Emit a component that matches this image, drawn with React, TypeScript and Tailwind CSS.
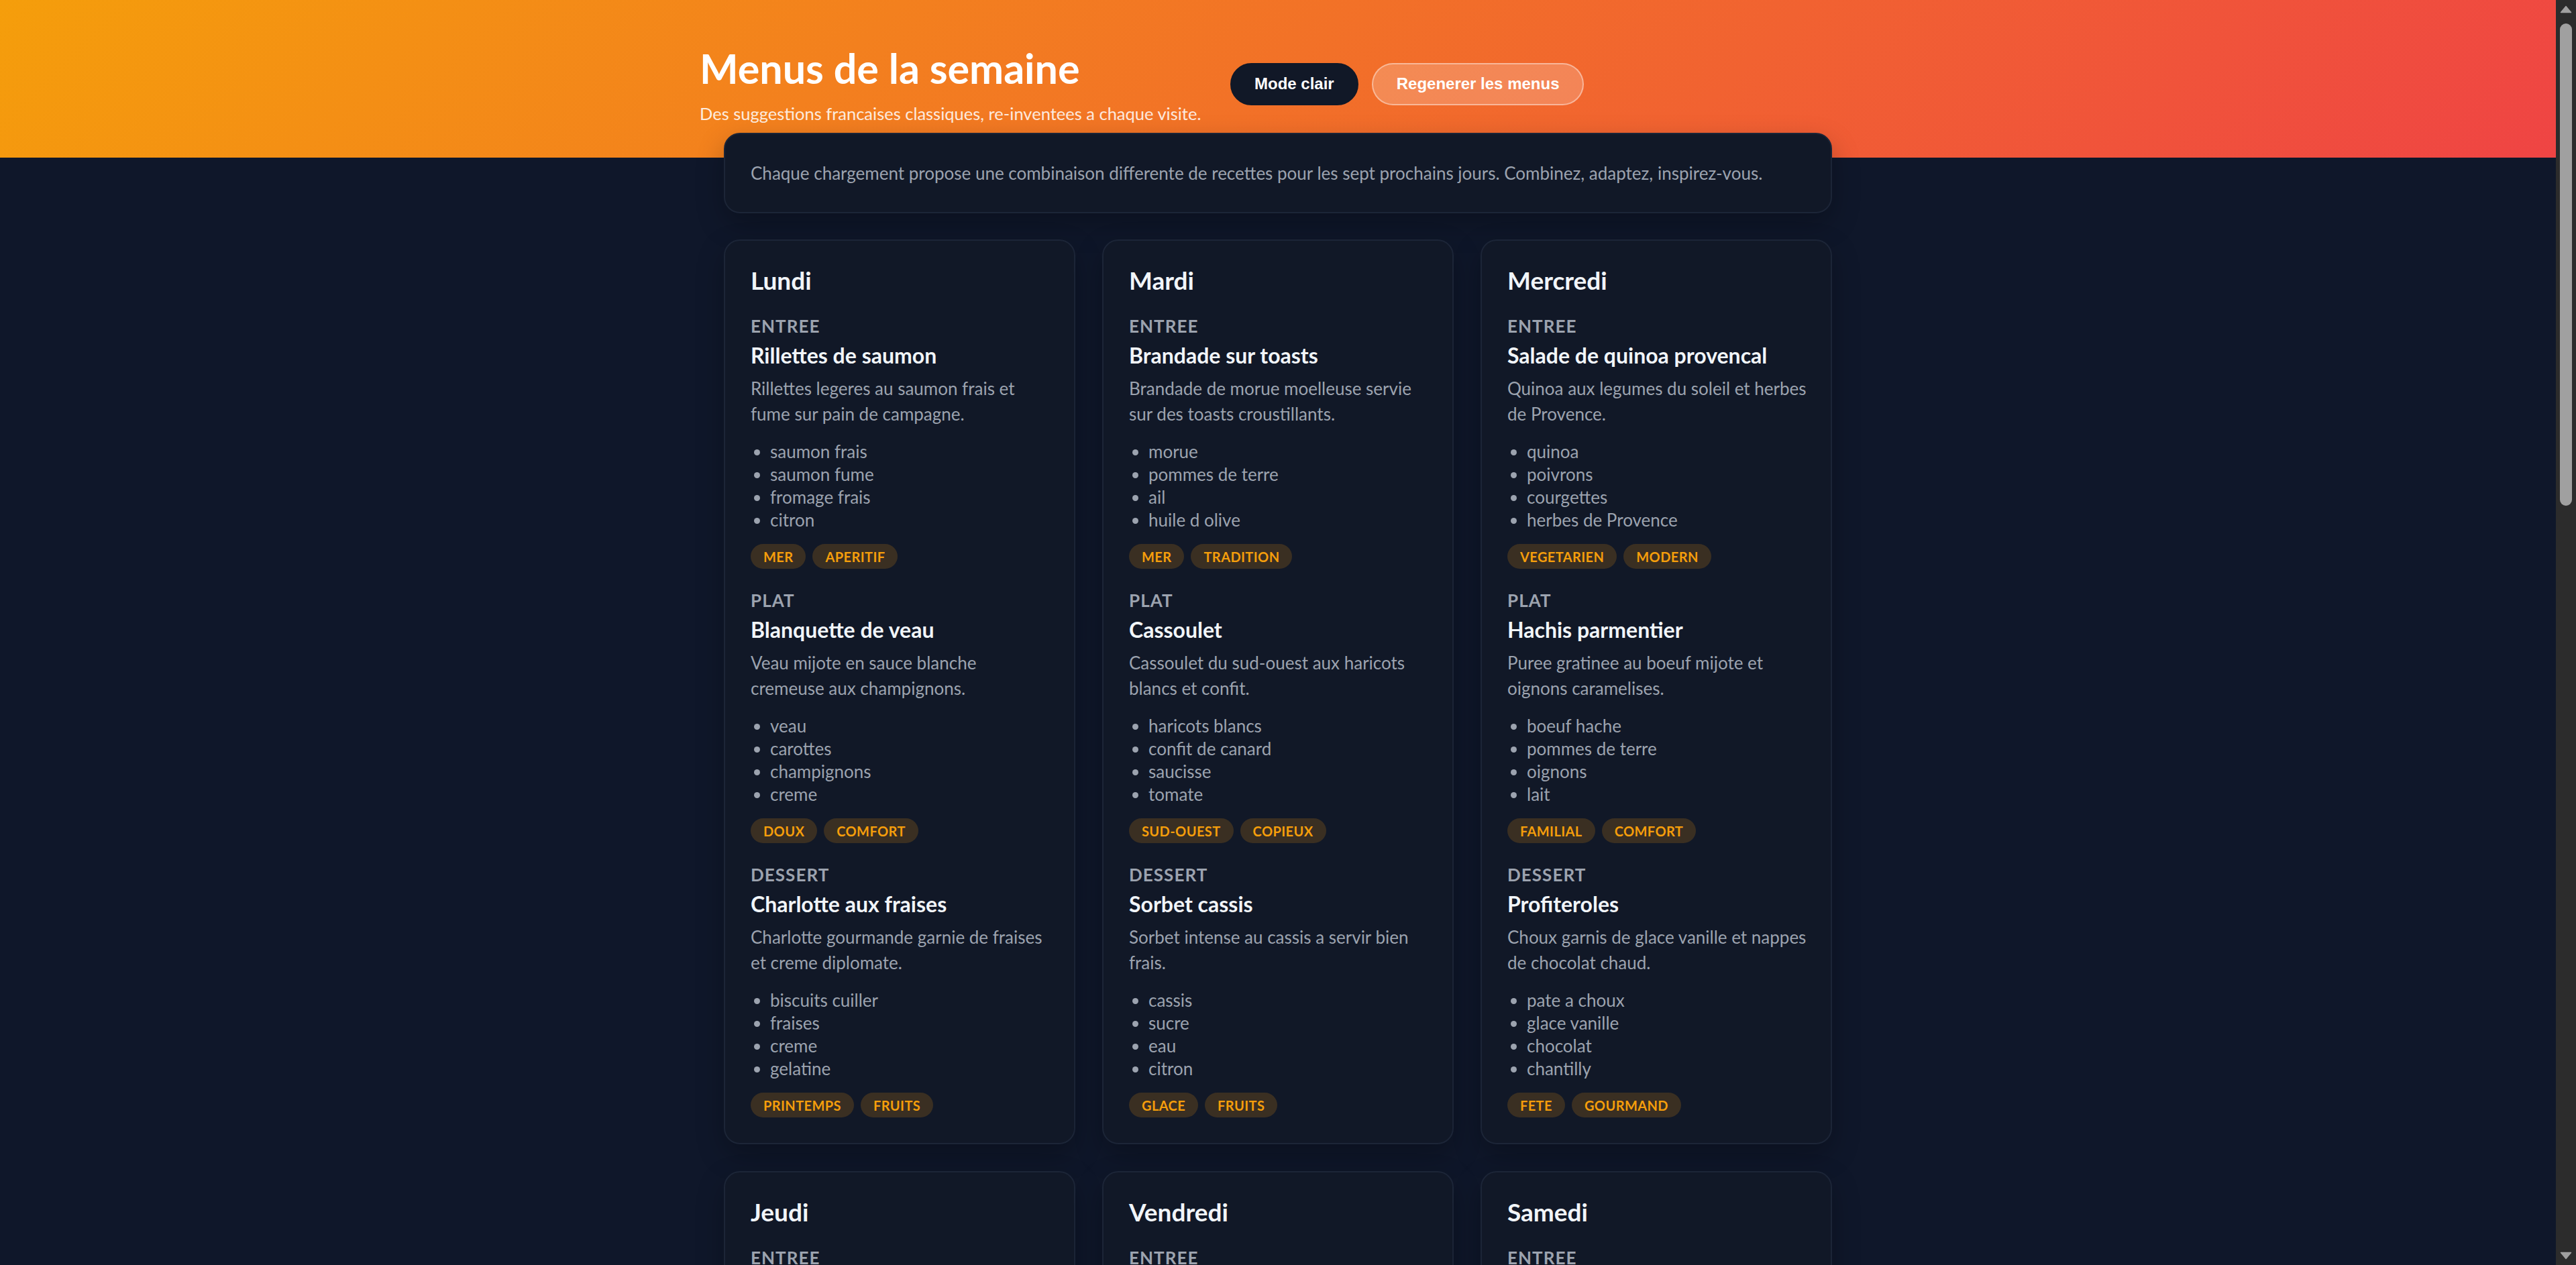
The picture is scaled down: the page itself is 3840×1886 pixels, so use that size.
type Dish = {
  name: string;
  desc: string;
  items: string[];
  tags: string[];
};

type Day = {
  day: string;
  entree: Dish;
  plat: Dish;
  dessert: Dish;
};

const week: Day[] = [
  {
    day: "Lundi",
    entree: {
      name: "Rillettes de saumon",
      desc: "Rillettes legeres au saumon frais et\nfume sur pain de campagne.",
      items: ["saumon frais", "saumon fume", "fromage frais", "citron"],
      tags: ["mer", "aperitif"],
    },
    plat: {
      name: "Blanquette de veau",
      desc: "Veau mijote en sauce blanche\ncremeuse aux champignons.",
      items: ["veau", "carottes", "champignons", "creme"],
      tags: ["doux", "comfort"],
    },
    dessert: {
      name: "Charlotte aux fraises",
      desc: "Charlotte gourmande garnie de fraises\net creme diplomate.",
      items: ["biscuits cuiller", "fraises", "creme", "gelatine"],
      tags: ["printemps", "fruits"],
    },
  },
  {
    day: "Mardi",
    entree: {
      name: "Brandade sur toasts",
      desc: "Brandade de morue moelleuse servie\nsur des toasts croustillants.",
      items: ["morue", "pommes de terre", "ail", "huile d olive"],
      tags: ["mer", "tradition"],
    },
    plat: {
      name: "Cassoulet",
      desc: "Cassoulet du sud-ouest aux haricots\nblancs et confit.",
      items: ["haricots blancs", "confit de canard", "saucisse", "tomate"],
      tags: ["sud-ouest", "copieux"],
    },
    dessert: {
      name: "Sorbet cassis",
      desc: "Sorbet intense au cassis a servir bien\nfrais.",
      items: ["cassis", "sucre", "eau", "citron"],
      tags: ["glace", "fruits"],
    },
  },
  {
    day: "Mercredi",
    entree: {
      name: "Salade de quinoa provencal",
      desc: "Quinoa aux legumes du soleil et herbes\nde Provence.",
      items: ["quinoa", "poivrons", "courgettes", "herbes de Provence"],
      tags: ["vegetarien", "modern"],
    },
    plat: {
      name: "Hachis parmentier",
      desc: "Puree gratinee au boeuf mijote et\noignons caramelises.",
      items: ["boeuf hache", "pommes de terre", "oignons", "lait"],
      tags: ["familial", "comfort"],
    },
    dessert: {
      name: "Profiteroles",
      desc: "Choux garnis de glace vanille et nappes\nde chocolat chaud.",
      items: ["pate a choux", "glace vanille", "chocolat", "chantilly"],
      tags: ["fete", "gourmand"],
    },
  },
  {
    day: "Jeudi",
    entree: {
      name: "Soupe a l oignon",
      desc: "Soupe gratinee aux oignons fondants\net croutons au comte.",
      items: ["oignons", "bouillon", "pain", "comte"],
      tags: ["hiver", "tradition"],
    },
    plat: {
      name: "Coq au vin",
      desc: "Volaille mijotee au vin rouge avec\nlardons et champignons.",
      items: ["poulet", "vin rouge", "lardons", "champignons"],
      tags: ["bourgogne", "copieux"],
    },
    dessert: {
      name: "Tarte tatin",
      desc: "Tarte renversee aux pommes\ncaramelisees.",
      items: ["pommes", "beurre", "sucre", "pate brisee"],
      tags: ["classique", "fruits"],
    },
  },
  {
    day: "Vendredi",
    entree: {
      name: "Oeufs mimosa",
      desc: "Oeufs durs farcis a la mayonnaise\net ciboulette.",
      items: ["oeufs", "mayonnaise", "ciboulette", "moutarde"],
      tags: ["aperitif", "simple"],
    },
    plat: {
      name: "Bouillabaisse",
      desc: "Soupe de poissons provencale au\nsafran et rouille.",
      items: ["poissons", "safran", "tomates", "fenouil"],
      tags: ["mer", "provence"],
    },
    dessert: {
      name: "Creme brulee",
      desc: "Creme vanillee sous une fine couche\nde sucre caramelise.",
      items: ["creme", "jaunes d oeufs", "vanille", "sucre"],
      tags: ["doux", "classique"],
    },
  },
  {
    day: "Samedi",
    entree: {
      name: "Gougeres",
      desc: "Petits choux au fromage dores et\nmoelleux.",
      items: ["farine", "oeufs", "gruyere", "beurre"],
      tags: ["aperitif", "fete"],
    },
    plat: {
      name: "Boeuf bourguignon",
      desc: "Boeuf mijote longuement au vin avec\ncarottes et oignons.",
      items: ["boeuf", "vin rouge", "carottes", "oignons"],
      tags: ["bourgogne", "comfort"],
    },
    dessert: {
      name: "Mousse au chocolat",
      desc: "Mousse aerienne au chocolat noir\nintense.",
      items: ["chocolat noir", "oeufs", "sucre", "sel"],
      tags: ["gourmand", "chocolat"],
    },
  },
  {
    day: "Dimanche",
    entree: {
      name: "Salade nicoise",
      desc: "Salade composee au thon, olives et\noeufs durs.",
      items: ["thon", "olives", "tomates", "oeufs"],
      tags: ["ete", "frais"],
    },
    plat: {
      name: "Poulet roti",
      desc: "Poulet fermier roti aux herbes et\npommes de terre.",
      items: ["poulet", "thym", "ail", "pommes de terre"],
      tags: ["familial", "dimanche"],
    },
    dessert: {
      name: "Ile flottante",
      desc: "Blancs en neige sur creme anglaise\net caramel.",
      items: ["oeufs", "lait", "sucre", "vanille"],
      tags: ["doux", "classique"],
    },
  },
];

function Course({ label, dish }: { label: string; dish: Dish }) {
  return (
    <div>
      <p className="text-[26px] leading-[32px] font-bold uppercase tracking-[0.04em] text-[#9ca3af]">
        {label}
      </p>
      <h3 className="mt-[8px] text-[32px] leading-[40px] font-bold text-[#f1f5f9]">
        {dish.name}
      </h3>
      <p className="mt-[10px] whitespace-pre text-[26px] leading-[38px] text-[#9ca3af]">
        {dish.desc}
      </p>
      <ul className="mt-[20px] list-disc pl-[29px] text-[26px] leading-[34px] text-[#9ca3af]">
        {dish.items.map((item) => (
          <li key={item}>{item}</li>
        ))}
      </ul>
      <div className="mt-[19px] flex gap-[10px]">
        {dish.tags.map((tag) => (
          <span
            key={tag}
            className="flex h-[37px] items-center rounded-full bg-[#3a2f22] px-[19px] text-[20px] font-bold uppercase tracking-[0.02em] text-[#f59e0b]"
          >
            {tag}
          </span>
        ))}
      </div>
    </div>
  );
}

function DayCard({ day }: { day: Day }) {
  return (
    <div className="flex flex-col gap-[31px] rounded-[24px] border-2 border-[#1c2537] bg-[#111827] p-[38px] shadow-[0_16px_40px_rgba(0,0,0,0.25)]">
      <h2 className="text-[37px] leading-[42px] font-bold text-[#f1f5f9]">{day.day}</h2>
      <Course label="Entree" dish={day.entree} />
      <Course label="Plat" dish={day.plat} />
      <Course label="Dessert" dish={day.dessert} />
    </div>
  );
}

function Scrollbar() {
  return (
    <div className="flex w-[30px] shrink-0 flex-col items-center bg-[#2c2c2c]">
      <svg width="18" height="12" viewBox="0 0 18 12" className="mt-[8px]">
        <path d="M9 1.5 L16.5 10.5 L1.5 10.5 Z" fill="#a0a0a0" stroke="#a0a0a0" strokeWidth="1.5" strokeLinejoin="round" />
      </svg>
      <div className="mt-[15px] h-[719px] w-[18px] rounded-full bg-[#a0a0a0]" />
      <div className="flex-1" />
      <svg width="18" height="12" viewBox="0 0 18 12" className="mb-[8px]">
        <path d="M9 10.5 L16.5 1.5 L1.5 1.5 Z" fill="#a0a0a0" stroke="#a0a0a0" strokeWidth="1.5" strokeLinejoin="round" />
      </svg>
    </div>
  );
}

export default function App() {
  return (
    <div className="flex h-screen overflow-hidden bg-[#0f172a] font-[Lato,sans-serif]">
      <div className="min-w-0 flex-1 overflow-hidden">
        <header className="bg-[linear-gradient(135deg,#f59e0b_0%,#ef4444_100%)]">
          <div className="mx-auto flex w-[1724px] items-center gap-[40px] pt-[67px] pb-[52px]">
            <div className="w-[751px] shrink-0">
              <h1 className="text-[61px] leading-[70px] font-bold text-white">Menus de la semaine</h1>
              <p className="mt-[18px] whitespace-nowrap text-[25.5px] leading-[28px] text-white/85">
                Des suggestions francaises classiques, re-inventees a chaque visite.
              </p>
            </div>
            <div className="flex gap-[20px] font-['Liberation_Sans',Arial,sans-serif] text-[24px] font-bold text-white">
              <button className="flex h-[63px] items-center rounded-full border-2 border-[#111827] bg-[#111827] px-[34px]">
                Mode clair
              </button>
              <button className="flex h-[63px] items-center rounded-full border-2 border-white/40 bg-white/20 px-[35px]">
                Regenerer les menus
              </button>
            </div>
          </div>
        </header>

        <main className="relative mx-auto -mt-[37px] w-[1652px] pb-[80px]">
          <div className="rounded-[24px] border-2 border-[#1c2537] bg-[#111827] px-[38px] py-[37px] text-[26px] leading-[42px] text-[#9ca3af] shadow-[0_16px_40px_rgba(0,0,0,0.25)]">
            Chaque chargement propose une combinaison differente de recettes pour les sept prochains jours. Combinez, adaptez, inspirez-vous.
          </div>

          <div className="mt-[39px] grid grid-cols-3 gap-[40px]">
            {week.map((d) => (
              <DayCard key={d.day} day={d} />
            ))}
          </div>
        </main>
      </div>
      <Scrollbar />
    </div>
  );
}
